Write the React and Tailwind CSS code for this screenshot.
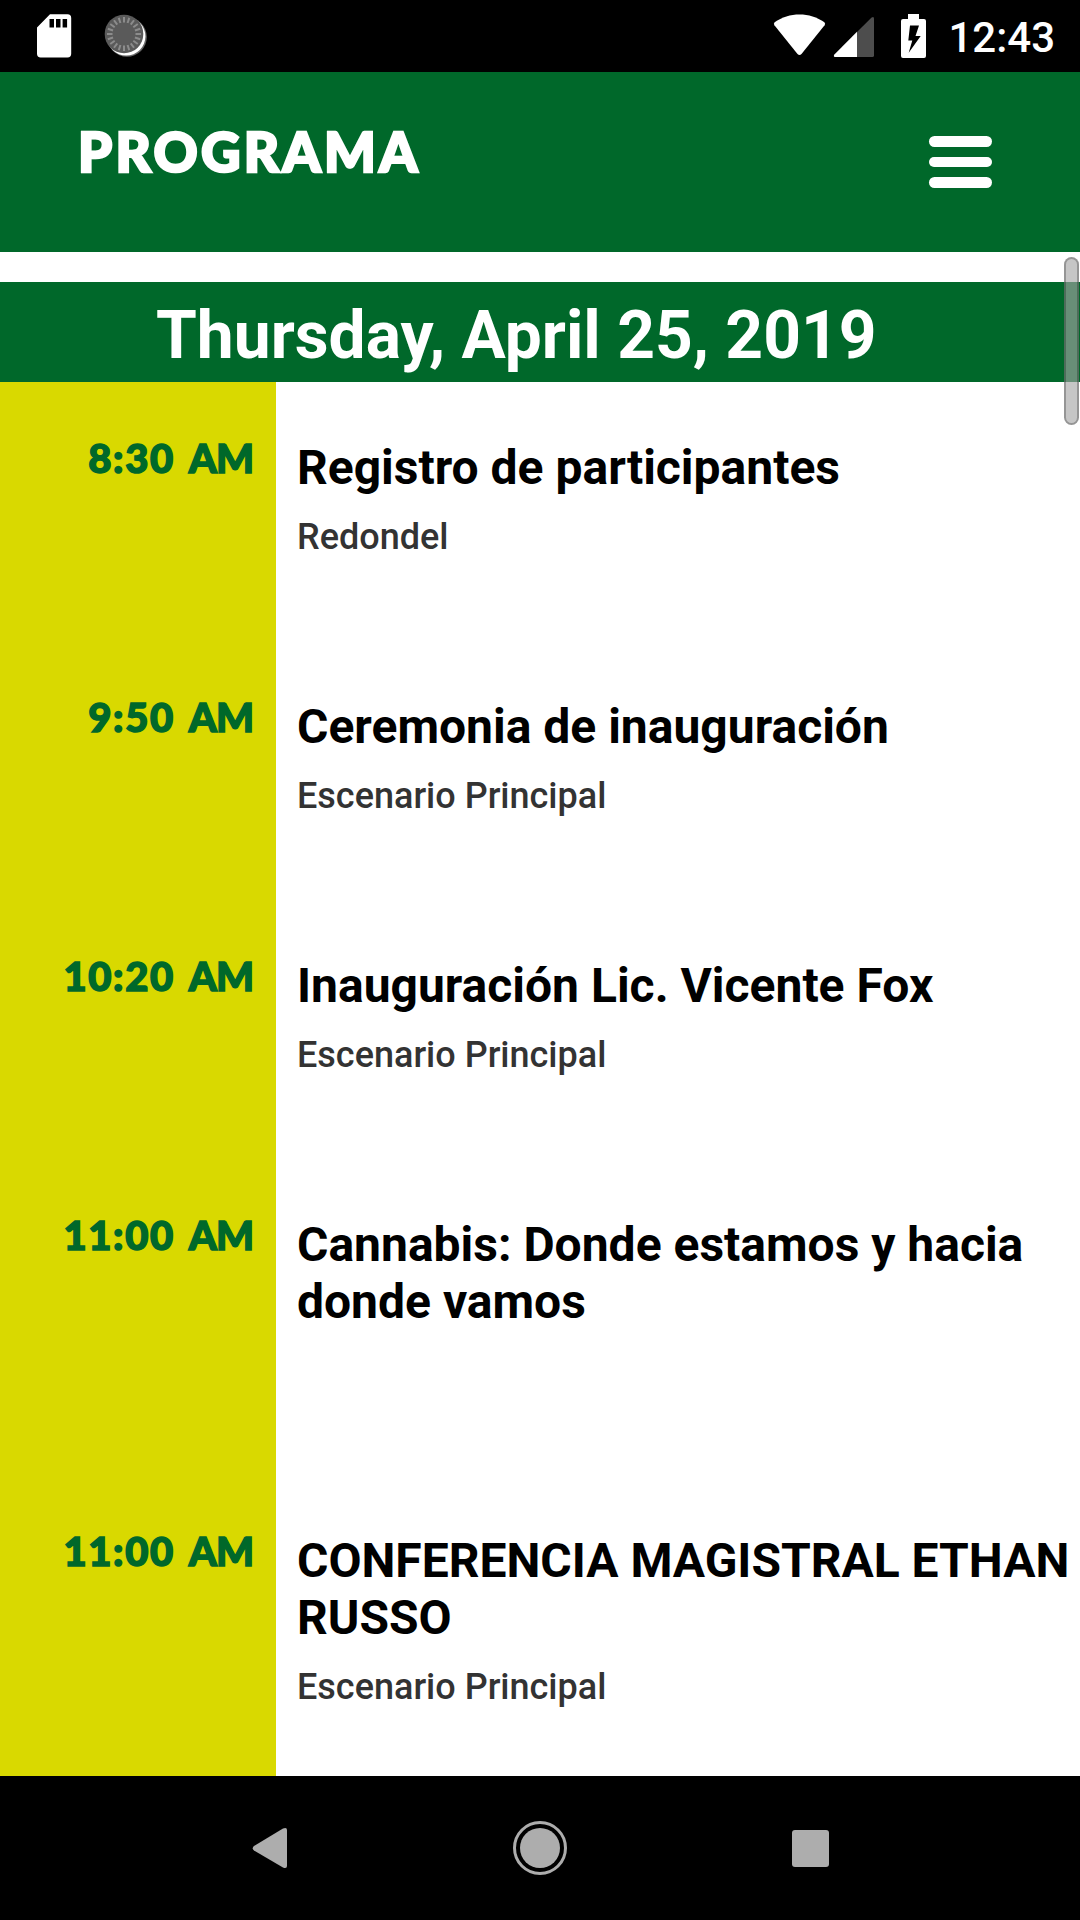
import React from 'react';

const events = [
  { time: '8:30', title: 'Registro de participantes', place: 'Redondel', height: 'h-[259px]' },
  { time: '9:50', title: 'Ceremonia de inauguración', place: 'Escenario Principal', height: 'h-[259px]' },
  { time: '10:20', title: 'Inauguración Lic. Vicente Fox', place: 'Escenario Principal', height: 'h-[259px]' },
  { time: '11:00', title: 'Cannabis: Donde estamos y hacia donde vamos', place: '', height: 'h-[316px]' },
  { time: '11:00', title: 'CONFERENCIA MAGISTRAL ETHAN RUSSO', place: 'Escenario Principal', height: 'h-[316px]' }
];

const SdCardIcon = () => (
  <svg width="36" height="72" viewBox="36 0 36 72">
    <path
      fill="#fff"
      fillRule="evenodd"
      d="M50 14.3H67.5Q71.2 14.3 71.2 18V53.8Q71.2 57.5 67.5 57.5H40.7Q37 57.5 37 53.8V27.5ZM49.5 19V27.6H54V19ZM56 19V27.6H60.5V19ZM62.6 19V27.6H67.1V19Z"
    />
  </svg>
);

const SpinnerIcon = () => {
  const spokes = Array.from({ length: 20 }, (_, i) => i * 18);
  return (
    <svg width="46" height="72" viewBox="102 0 46 72">
      <circle cx="127" cy="37" r="19.8" fill="#666" />
      <circle cx="126.2" cy="36.4" r="19.2" fill="#fff" />
      <circle cx="124" cy="34" r="19.3" fill="#5a5a5a" />
      {spokes.map((angle) => (
        <path
          key={angle}
          d="M124 17V22.5"
          stroke="#8c8c8c"
          strokeWidth="2"
          transform={`rotate(${angle} 124 34)`}
        />
      ))}
    </svg>
  );
};

const StatusBar = () => (
  <div className="flex h-[72px] items-center bg-black pl-9 pr-[25px] text-white">
    <SdCardIcon />
    <div className="ml-[30px]">
      <SpinnerIcon />
    </div>
    <svg className="ml-auto" width="160" height="72" viewBox="770 0 160 72">
      <path
        fill="#fff"
        d="M774.6 22.2C789 11.8 810 11.8 824.4 22.2Q825.8 23.6 824.6 25.2L801.5 54Q799.5 56.2 797.5 54L774.4 25.2Q773.2 23.6 774.6 22.2Z"
      />
      <path fill="#4d4d4d" d="M857 32L871.6 17.6Q874 16.2 874 18.6V55.4Q874 57 872.4 57H857Z" />
      <path fill="#fff" d="M857 31.8V57H835Q833 56.4 834.4 54.4Z" />
      <path
        fill="#fff"
        fillRule="evenodd"
        d="M908 14H919V19H924Q926 19 926 21V56Q926 58 924 58H903Q901 58 901 56V21Q901 19 903 19H908ZM910 25.5L908.3 40.5H912.3L908.7 52.8L920.7 36H915.5L919 25.5Z"
      />
    </svg>
    <span className="ml-[18px] mt-[3px] text-[42px] font-medium leading-none">12:43</span>
  </div>
);

const Header = () => (
  <header className="flex h-[180px] justify-between bg-[#00682a] pl-[78px] pr-[88px]">
    <h1 className="mt-[46px] font-['Lato',sans-serif] text-[54.5px] font-black leading-[67px] tracking-[3.3px] text-white [-webkit-text-stroke:2.5px_#fff]">
      PROGRAMA
    </h1>
    <div className="mt-16 flex flex-col gap-[10px]">
      <span className="h-[10.67px] w-[63px] rounded-full bg-white" />
      <span className="h-[10.67px] w-[63px] rounded-full bg-white" />
      <span className="h-[10.67px] w-[63px] rounded-full bg-white" />
    </div>
  </header>
);

const EventRow = ({ event }) => (
  <div className={`flex shrink-0 ${event.height}`}>
    <div className="w-[276px] shrink-0 bg-[#d9d900] pr-6 pt-[51px] text-right font-['Lato',sans-serif] text-[40px] font-black leading-[50px] tracking-[1.6px] text-[#00682a] [-webkit-text-stroke:1.5px_#00682a] [word-spacing:3px]">
      {event.time} <span className="-mr-px tracking-[-1px]">AM</span>
    </div>
    <div className="flex-1 pl-[21px] pt-[57px]">
      <h3 className="-mr-4 text-[48px] font-bold leading-[57px] text-black">{event.title}</h3>
      <p className="mt-[19px] text-[36px] font-medium leading-[44px] text-[#333]">{event.place}</p>
    </div>
  </div>
);

const NavBar = () => (
  <div className="flex h-36 items-center justify-center gap-[216px] bg-black">
    <svg width="54" height="54" viewBox="243 1821 54 54">
      <path fill="#adadad" d="M254 1846L283 1828.5Q287 1827 287 1830V1866Q287 1869 283 1867.5L254 1850.5Q251.500 1848 254 1846Z" />
    </svg>
    <svg width="54" height="54" viewBox="0 0 54 54">
      <circle cx="27" cy="27" r="25.5" fill="none" stroke="#adadad" strokeWidth="3" />
      <circle cx="27" cy="27" r="20" fill="#adadad" />
    </svg>
    <div className="flex w-[54px] justify-center">
      <span className="h-[37px] w-[37px] rounded-[3px] bg-[#adadad]" />
    </div>
  </div>
);

const App = () => {
  return (
    <div className="flex h-[1920px] w-[1080px] flex-col overflow-hidden bg-white font-['Roboto',sans-serif]">
      <StatusBar />
      <Header />
      <main className="relative h-[1524px] overflow-hidden pt-[30px]">
        <h2 className="h-[100px] bg-[#00682a] pl-[156px] pt-[14px] text-[65.9px] font-bold leading-[79px] text-white">
          Thursday, April 25, 2019
        </h2>
        {events.map((event, index) => (
          <EventRow key={index} event={event} />
        ))}
        {/* scroll thumb floats over the list */}
        <div className="absolute right-[1px] top-[5px] h-[168px] w-[15px] rounded-full border-2 border-black/25 bg-[#a5a5a5]/63" />
      </main>
      <NavBar />
    </div>
  );
};

export default App;
